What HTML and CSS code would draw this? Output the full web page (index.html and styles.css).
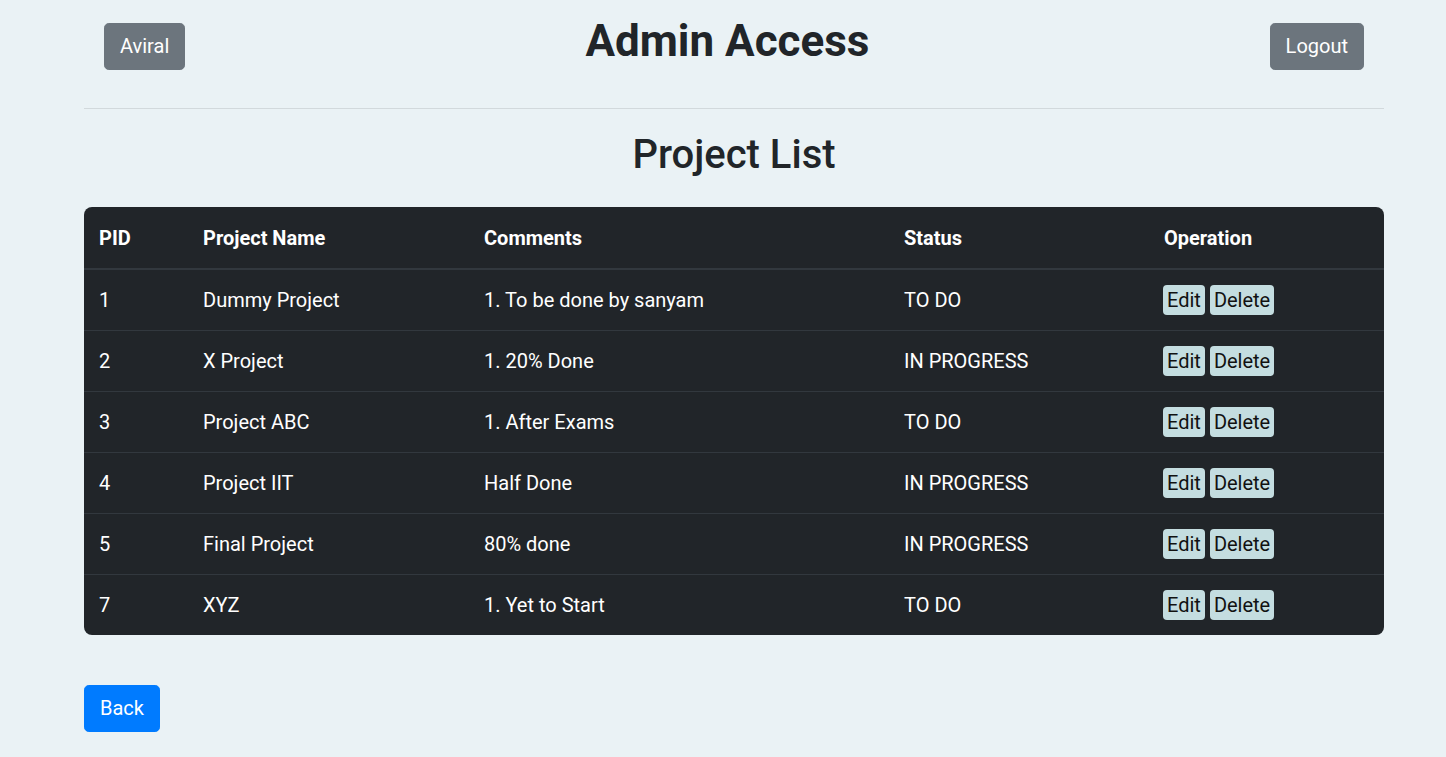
FILE: index.html
```html
<!DOCTYPE html>
<html lang="en">
<head>
<meta charset="utf-8">
<title>Admin Access</title>
<link rel="stylesheet" href="styles.css">
</head>
<body>
<div class="page">
  <header class="header">
    <button class="btn btn-secondary">Aviral</button>
    <h1 class="title">Admin Access</h1>
    <button class="btn btn-secondary">Logout</button>
  </header>
  <hr class="divider">
  <h2 class="subtitle">Project List</h2>
  <div class="table-wrap">
    <table class="projects">
      <colgroup>
        <col class="c-pid"><col class="c-name"><col class="c-comments"><col class="c-status"><col class="c-op">
      </colgroup>
      <thead>
        <tr><th>PID</th><th>Project Name</th><th>Comments</th><th>Status</th><th>Operation</th></tr>
      </thead>
      <tbody>
        <tr><td>1</td><td>Dummy Project</td><td>1. To be done by sanyam</td><td>TO DO</td><td><div class="ops"><button class="op">Edit</button><button class="op">Delete</button></div></td></tr>
        <tr><td>2</td><td>X Project</td><td>1. 20% Done</td><td>IN PROGRESS</td><td><div class="ops"><button class="op">Edit</button><button class="op">Delete</button></div></td></tr>
        <tr><td>3</td><td>Project ABC</td><td>1. After Exams</td><td>TO DO</td><td><div class="ops"><button class="op">Edit</button><button class="op">Delete</button></div></td></tr>
        <tr><td>4</td><td>Project IIT</td><td>Half Done</td><td>IN PROGRESS</td><td><div class="ops"><button class="op">Edit</button><button class="op">Delete</button></div></td></tr>
        <tr><td>5</td><td>Final Project</td><td>80% done</td><td>IN PROGRESS</td><td><div class="ops"><button class="op">Edit</button><button class="op">Delete</button></div></td></tr>
        <tr><td>7</td><td>XYZ</td><td>1. Yet to Start</td><td>TO DO</td><td><div class="ops"><button class="op">Edit</button><button class="op">Delete</button></div></td></tr>
      </tbody>
    </table>
  </div>
  <button class="btn btn-primary back">Back</button>
</div>
</body>
</html>
```
FILE: styles.css
```css
* { box-sizing: border-box; }
html, body {
  margin: 0;
  padding: 0;
  background: #eaf2f5;
  color: #212529;
  font-family: Roboto, "Liberation Sans", Arial, sans-serif;
}
.page {
  width: 1300px;
  margin-left: 84px;
  padding-bottom: 20px;
}
.header {
  display: flex;
  justify-content: space-between;
  align-items: flex-start;
  padding: 15px 20px 0;
}
.btn {
  font-family: inherit;
  font-size: 20px;
  line-height: 30px;
  padding: 7px 15px 9px;
  border: 1px solid transparent;
  border-radius: 4.8px;
  color: #fff;
  cursor: pointer;
  height: 47px;
  display: inline-flex;
  align-items: center;
}
.btn-secondary {
  background: #6c757d;
  border-color: #6c757d;
  margin-top: 8px;
}
.btn-primary {
  background: #007bff;
  border-color: #007bff;
}
.title {
  margin: 0;
  font-size: 44px;
  line-height: 53px;
  font-weight: 700;
}
.divider {
  margin: 38px 0 0;
  border: 0;
  border-top: 1px solid rgba(0, 0, 0, 0.1);
}
.subtitle {
  margin: 22px 0 28px;
  text-align: center;
  font-size: 40px;
  line-height: 48px;
  font-weight: 500;
}
.table-wrap {
  background: #212529;
  border-radius: 8px;
  overflow: hidden;
}
.projects {
  width: 100%;
  border-collapse: collapse;
  color: #fff;
  font-size: 20px;
  line-height: 30px;
}
.c-pid { width: 104px; }
.c-name { width: 281px; }
.c-comments { width: 420px; }
.c-status { width: 260px; }
.c-op { width: 235px; }
.projects th {
  text-align: left;
  font-weight: 700;
  padding: 16px 15px 15px;
  border-bottom: 2px solid #32383e;
}
.projects td {
  padding: 15px;
  border-bottom: 1px solid #32383e;
  vertical-align: top;
}
.projects tbody tr:last-child td {
  border-bottom: 0;
}
.ops {
  display: flex;
  gap: 5px;
  margin-left: -1px;
}
.op {
  font-family: inherit;
  font-size: 20px;
  line-height: 24px;
  padding: 3px 4px;
  border: 0;
  border-radius: 4px;
  background: #c4dde0;
  color: #111;
  cursor: pointer;
}
.back {
  margin-top: 50px;
}
```
